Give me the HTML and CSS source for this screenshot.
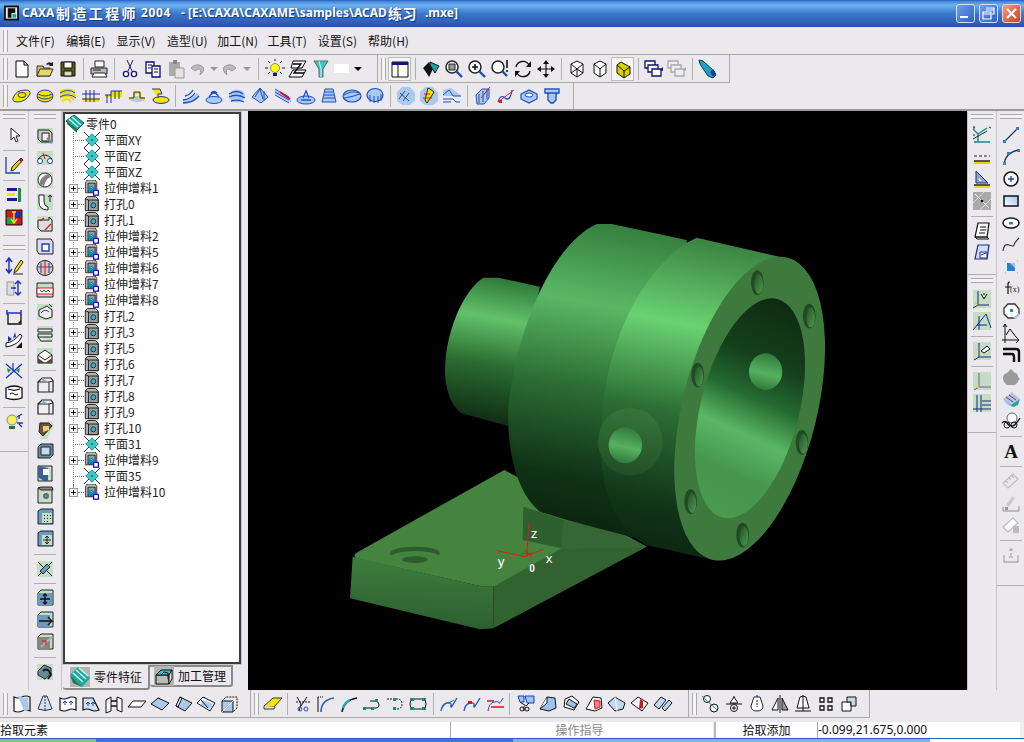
FILE: index.html
```html
<!DOCTYPE html>
<html lang="zh">
<head>
<meta charset="utf-8">
<title>CAXA制造工程师2004</title>
<link rel="stylesheet" href="styles.css">
</head>
<body>
<svg class="defs" width="0" height="0">
<defs>
<symbol id="new" viewBox="0 0 20 20"><path d="M4 2h8l4 4v12H4z" fill="#fff" stroke="#000"/><path d="M12 2v4h4" fill="none" stroke="#000"/></symbol>
<symbol id="open" viewBox="0 0 20 20"><path d="M2 7h6l1 2h6v8H2z" fill="#c8c860" stroke="#333"/><path d="M2 17l3-7h13l-3 7z" fill="#e8d860" stroke="#333"/><path d="M11 5q3-3 5-1l2-1v4h-4l1-1q-2-1-3 0" fill="#222"/></symbol>
<symbol id="save" viewBox="0 0 20 20"><path d="M3 3h14v14H3z" fill="#5b5b10" stroke="#111"/><path d="M6 3h8v6H6z" fill="#fff" stroke="#111"/><path d="M6 12h8v5H6z" fill="#d8d8c0" stroke="#111"/></symbol>
<symbol id="print" viewBox="0 0 20 20"><path d="M6 2h9v6H6z" fill="#fff" stroke="#222"/><path d="M2 9h16v6H2z" fill="#bbb" stroke="#222"/><path d="M5 14h11l2 4H3z" fill="#fff" stroke="#222"/><path d="M4 11h8" stroke="#222"/></symbol>
<symbol id="cut" viewBox="0 0 20 20"><path d="M7 1l5 11M13 1L8 12" stroke="#1c1c80" fill="none"/><circle cx="6" cy="15" r="2.6" fill="#fff" stroke="#1c1c80" stroke-width="1.4"/><circle cx="14" cy="15" r="2.6" fill="#fff" stroke="#1c1c80" stroke-width="1.4"/></symbol>
<symbol id="copy" viewBox="0 0 20 20"><path d="M3 3h8v11H3z" fill="#fff" stroke="#0a0a70" stroke-width="1.3"/><path d="M9 7h8v11H9z" fill="#fff" stroke="#0a0a70" stroke-width="1.3"/><path d="M5 6h4M5 9h3M11 10h4M11 13h4" stroke="#0a0a70"/></symbol>
<symbol id="paste" viewBox="0 0 20 20"><path d="M3 3h11v14H3z" fill="#aaa"/><path d="M7 1h4v4H7z" fill="#888"/><path d="M9 9h9v10H9z" fill="#e4e4e4" stroke="#999"/></symbol>
<symbol id="undo" viewBox="0 0 20 20"><path d="M4 9q6-6 12-1q2 4-3 8q2-6-2-6l-3 2-4-3z" fill="#bbb" stroke="#999"/></symbol>
<symbol id="redo" viewBox="0 0 20 20"><path d="M16 9q-6-6-12-1q-2 4 3 8q-2-6 2-6l3 2 4-3z" fill="#bbb" stroke="#999"/></symbol>
<symbol id="drop" viewBox="0 0 20 20"><path d="M6 8h8l-4 4z" fill="#000"/></symbol>
<symbol id="dropg" viewBox="0 0 20 20"><path d="M6 8h8l-4 4z" fill="#999"/></symbol>
<symbol id="light" viewBox="0 0 20 20"><circle cx="10" cy="9" r="4.5" fill="#ff0" stroke="#888"/><path d="M8 14h4v3H8z" fill="#1a1a90"/><path d="M10 0v2M3 2l2 2M17 2l-2 2M0 9h3M17 9h3M3 15l2-2M17 15l-2-2" stroke="#111"/></symbol>
<symbol id="zpl" viewBox="0 0 20 20"><path d="M5 2h13l-4 7H3z" fill="#fff" stroke="#000"/><path d="M5 11h13l-4 7H1z" fill="#fff" stroke="#000"/><path d="M5 5h8l-7 9h10" fill="none" stroke="#000" stroke-width="1.3"/></symbol>
<symbol id="fun" viewBox="0 0 20 20"><path d="M3 2h14l-5 8v8H8v-8z" fill="#35c8c8" stroke="#666"/><path d="M8 2l2 8V18" stroke="#cff" fill="none"/></symbol>
<symbol id="lay" viewBox="0 0 20 20"><path d="M2 3h16v15H2z" fill="#fff" stroke="#111"/><path d="M2 3h16v3H2z" fill="#14147c"/><path d="M8 6v12" stroke="#111"/></symbol>
<symbol id="fly" viewBox="0 0 20 20"><path d="M2 9l6-6 4 7-4 8q-3-5-6-9z" fill="#111"/><path d="M9 3l9 4-4 7-5-8z" fill="#12a5a5" stroke="#111"/></symbol>
<symbol id="zwin" viewBox="0 0 20 20"><circle cx="8" cy="8" r="6" fill="#fff" stroke="#222" stroke-width="1.5"/><path d="M5 5h6v6H5z" fill="#999" stroke="#222"/><path d="M12 12l6 6" stroke="#1c4ea8" stroke-width="2.4"/></symbol>
<symbol id="zin" viewBox="0 0 20 20"><circle cx="8" cy="8" r="6" fill="#fff" stroke="#222" stroke-width="1.5"/><path d="M5 8h6M8 5v6" stroke="#111" stroke-width="1.6"/><path d="M12 12l6 6" stroke="#1c4ea8" stroke-width="2.4"/></symbol>
<symbol id="zex" viewBox="0 0 20 20"><circle cx="8" cy="8" r="6" fill="#fff" stroke="#222" stroke-width="1.5"/><path d="M12 12l5 5" stroke="#1c4ea8" stroke-width="2.4"/><path d="M17 1v8M17 11v2" stroke="#111" stroke-width="1.6"/></symbol>
<symbol id="rot" viewBox="0 0 20 20"><path d="M3 8a7 7 0 0 1 13-2M17 12a7 7 0 0 1-13 2" fill="none" stroke="#111" stroke-width="1.4"/><path d="M18 2v6h-5zM2 18v-6h5z" fill="#111"/></symbol>
<symbol id="pan" viewBox="0 0 20 20"><path d="M10 2v16M2 10h16" stroke="#111" stroke-width="1.2"/><path d="M10 1l3 4H7zM10 19l3-4H7zM1 10l4-3v6zM19 10l-4-3v6z" fill="#111"/></symbol>
<symbol id="cwire" viewBox="0 0 20 20"><path d="M10 2l6 3v9l-6 4-6-4V5z" fill="#fff" stroke="#111"/><path d="M4 5l6 5 6-5M10 10v8M4 14l6-4 6 4" stroke="#111" fill="none"/></symbol>
<symbol id="chide" viewBox="0 0 20 20"><path d="M10 2l6 3v9l-6 4-6-4V5z" fill="#fff" stroke="#111"/><path d="M4 5l6 5 6-5M10 10v8" stroke="#111" fill="none"/></symbol>
<symbol id="cshade" viewBox="0 0 20 20"><path d="M8 3l9 5v7l-6 4-7-5V6z" fill="#d8d000" stroke="#111"/><path d="M4 6l7 6 6-4M11 12v7" stroke="#111" fill="none"/></symbol>
<symbol id="lay1" viewBox="0 0 20 20"><path d="M1 2h10v7H1z" fill="#fff" stroke="#10106c" stroke-width="1.3"/><path d="M4 6h10v7H4z" fill="#fff" stroke="#10106c" stroke-width="1.3"/><path d="M8 10h9v7H8z" fill="#fff" stroke="#10106c" stroke-width="1.3"/><path d="M16 11l3-3v4z" fill="#10106c"/></symbol>
<symbol id="lay2" viewBox="0 0 20 20"><path d="M1 2h10v7H1z" fill="#eee" stroke="#aaa" stroke-width="1.3"/><path d="M4 6h10v7H4z" fill="#eee" stroke="#aaa" stroke-width="1.3"/><path d="M8 10h9v7H8z" fill="#eee" stroke="#aaa" stroke-width="1.3"/><path d="M16 11l3-3v4z" fill="#aaa"/></symbol>
<symbol id="bot" viewBox="0 0 20 20"><path d="M1 1l4 1 11 10 2 4-3 3-5-2L2 5z" fill="#1aa6c0" stroke="#0a3a50"/><path d="M12 13l3-3 3 5-3 3z" fill="#1240a0"/></symbol>

<symbol id="y1" viewBox="0 0 20 20"><path d="M1 12q3-8 12-8q6 0 5 4q-4 8-13 8q-5 0-4-4z" fill="#f5e500" stroke="#1f3fb0"/><ellipse cx="10" cy="9" rx="4" ry="2.5" fill="none" stroke="#1f3fb0"/></symbol>
<symbol id="y2" viewBox="0 0 20 20"><ellipse cx="10" cy="10" rx="8" ry="6" fill="#f5e500" stroke="#1f3fb0"/><path d="M3 8q7 4 14 0M3 11q7 4 14 0" stroke="#1f3fb0" fill="none"/></symbol>
<symbol id="y3" viewBox="0 0 20 20"><path d="M2 6q8-5 15 0M2 9q8-5 16 1M2 12q8-5 14 2M4 15q6-4 9 1" fill="none" stroke="#f0dc00" stroke-width="2.2"/><path d="M2 7q8-5 15 0M2 11q8-5 16 1" fill="none" stroke="#1f3fb0"/></symbol>
<symbol id="y4" viewBox="0 0 20 20"><path d="M2 12h16v4H2z" fill="#f5e500"/><path d="M1 8h18M1 13h18M5 4v12M9 4v12M13 4v12" stroke="#1f2f90"/></symbol>
<symbol id="y5" viewBox="0 0 20 20"><path d="M1 9h6V5h11v6H1z" fill="#f5e500"/><path d="M1 9h6V5h11M3 9v8M7 9v8M11 5v8M15 5v8" stroke="#1f2f90" fill="none"/></symbol>
<symbol id="y6" viewBox="0 0 20 20"><ellipse cx="10" cy="13" rx="8" ry="3" fill="#a9c9ef"/><path d="M2 13h5V7h6v6h5" fill="none" stroke="#f0dc00" stroke-width="2"/><path d="M2 12h5V6h6v6h5" fill="none" stroke="#333"/></symbol>
<symbol id="y7" viewBox="0 0 20 20"><ellipse cx="11" cy="14" rx="8" ry="3.4" fill="#f5e500" stroke="#1f2f90"/><path d="M2 3h8l2 5H8v4" fill="#f5e500" stroke="#1f2f90"/></symbol>
<symbol id="b1" viewBox="0 0 20 20"><path d="M2 17q10 0 16-7l-2-3q-6 6-14 7z" fill="#a9c9ef"/><path d="M2 14q8-1 12-7M2 17q10 0 16-7M4 10q5-1 8-6" fill="none" stroke="#1f4fc0" stroke-width="1.3"/></symbol>
<symbol id="b2" viewBox="0 0 20 20"><ellipse cx="10" cy="14" rx="8" ry="3.5" fill="#a9c9ef" stroke="#1f4fc0"/><path d="M5 11q5-8 10 0M7 7q3-3 6 0" fill="none" stroke="#1f4fc0" stroke-width="1.3"/></symbol>
<symbol id="b3" viewBox="0 0 20 20"><ellipse cx="10" cy="10" rx="8" ry="6.5" fill="#a9c9ef"/><path d="M2 8q8-5 14 0M2 11q8-4 16 1M4 15q8-2 13 1" fill="none" stroke="#1f4fc0" stroke-width="1.3"/></symbol>
<symbol id="b4" viewBox="0 0 20 20"><path d="M10 2l8 9-7 6-9-6z" fill="#a9c9ef" stroke="#1f4fc0"/><path d="M5 11l5-8 3 10M14 5v10" stroke="#1f4fc0" fill="none"/></symbol>
<symbol id="b5" viewBox="0 0 20 20"><path d="M2 4l16 9v4L2 8z" fill="#a9c9ef"/><path d="M2 3l14 8M2 6l14 8M2 9l14 8" stroke="#1f4fc0"/><path d="M7 6l10 7" stroke="#d01030" stroke-width="2"/></symbol>
<symbol id="b6" viewBox="0 0 20 20"><ellipse cx="10" cy="14" rx="9" ry="4" fill="#a9c9ef" stroke="#1f4fc0"/><path d="M7 12l3-7 3 7M5 14h10" fill="none" stroke="#1f4fc0" stroke-width="1.3"/></symbol>
<symbol id="b7" viewBox="0 0 20 20"><path d="M6 3h8l1 5 2 8H3l2-8z" fill="#a9c9ef"/><path d="M6 3h8M6 6h8M5 9h10M4 12h12M3 16h14M6 3L3 16M14 3l3 13" stroke="#1f4fc0" fill="none"/></symbol>
<symbol id="b8" viewBox="0 0 20 20"><ellipse cx="10" cy="10" rx="9" ry="6" fill="#a9c9ef" stroke="#1f4fc0" stroke-width="1.2"/><path d="M2 9q8-5 15-2M2 12q8-1 16-4" stroke="#1f4fc0" fill="none"/></symbol>
<symbol id="b9" viewBox="0 0 20 20"><ellipse cx="10" cy="9" rx="8" ry="6.5" fill="#a9c9ef" stroke="#1f4fc0" stroke-width="1.2"/><path d="M5 9v7M9 10v7M13 10v7M16 8v7" stroke="#1f4fc0"/></symbol>
<symbol id="h1" viewBox="0 0 20 20"><path d="M6 1h8l5 6v8l-5 4H6l-5-4V6z" fill="#a9c9ef"/><path d="M3 13l6-8M7 15l6-8M4 7l9 8" stroke="#2a4f90"/></symbol>
<symbol id="h2" viewBox="0 0 20 20"><path d="M6 1h8l5 6v8l-5 4H6l-5-4V6z" fill="#a9c9ef"/><path d="M9 2l-3 12 2 3 7-11-4-3z" fill="#f5e500" stroke="#222"/><path d="M5 8h6M4 12h9" stroke="#d02020"/></symbol>
<symbol id="h3" viewBox="0 0 20 20"><path d="M1 4l8-2 10 8H1z" fill="#a9c9ef"/><path d="M1 9l6-5 4 6h8M1 13h10l3 3h4M1 16h8" stroke="#1f4fc0" fill="none"/></symbol>
<symbol id="k1" viewBox="0 0 20 20"><path d="M3 9l6-6h7v9l-5 6H4z" fill="#a9c9ef" stroke="#1f4fc0"/><path d="M6 8v9M10 5v11M14 3v10" stroke="#1f4fc0"/><path d="M8 12l9-11" stroke="#e02020"/></symbol>
<symbol id="k2" viewBox="0 0 20 20"><path d="M2 16q2-8 7-4t7-8" fill="none" stroke="#1f4fc0" stroke-width="1.3"/><path d="M2 16l16-12" stroke="#e02020"/><rect x="3" y="14" width="3" height="3" fill="#e02020"/></symbol>
<symbol id="k3" viewBox="0 0 20 20"><path d="M2 8l8-4 8 4v5l-8 4-8-4z" fill="#a9c9ef" stroke="#1f4fc0" stroke-width="1.2"/><ellipse cx="10" cy="9" rx="4" ry="2" fill="#fff" stroke="#1f4fc0"/></symbol>
<symbol id="k4" viewBox="0 0 20 20"><path d="M4 4h13v3l-3 4v4l-3 3H9l-2-3v-4L4 7z" fill="#a9c9ef"/><path d="M3 3h14v4H3zM6 7v7l3 3h2l3-3V7" fill="none" stroke="#1f4fc0" stroke-width="1.4"/></symbol>

<symbol id="arrow" viewBox="0 0 20 20"><path d="M7 3v12l3-3 2 5 2-1-2-5h4z" fill="#fff" stroke="#222"/></symbol>
<symbol id="pen" viewBox="0 0 20 20"><path d="M2 2v16h14" fill="none" stroke="#1f3fb0" stroke-width="1.3"/><path d="M17 3l2 2-9 10-3 1 1-4z" fill="#e8d000" stroke="#222"/><path d="M15 5l2-2 2 2-2 2z" fill="#c01010"/></symbol>
<symbol id="lib" viewBox="0 0 20 20"><path d="M3 3h10v3H3z" fill="#1a1a90"/><path d="M3 8h8v3H3z" fill="#f5e500"/><path d="M3 13h10v3H3z" fill="#1a1a90"/><path d="M14 3h3v14h-3z" fill="#1f9040"/></symbol>
<symbol id="col" viewBox="0 0 20 20"><path d="M2 3h16v15H2z" fill="#d01818" stroke="#111"/><path d="M3 10h7v7H3z" fill="#20a040"/><path d="M10 4h7v7h-7z" fill="#1a30c0"/><path d="M8 5h4M10 4v11M7 12l3 4 3-4" stroke="#f5e500" stroke-width="1.4" fill="none"/></symbol>
<symbol id="ti" viewBox="0 0 20 20"><path d="M5 3v13M2 6l3-4 3 4M2 13l3 4 3-4" fill="none" stroke="#1a30c0" stroke-width="1.5"/><path d="M10 17l1-4 6-9 2 2-6 9z" fill="#f5e500" stroke="#222"/><path d="M9 18h10" stroke="#222"/></symbol>
<symbol id="tj" viewBox="0 0 20 20"><path d="M3 4h7v13H3z" fill="#ddd" stroke="#999"/><path d="M14 3v14M11 6l3-3 3 3M11 14l3 3 3-3M7 10h5" fill="none" stroke="#1a30c0" stroke-width="1.4"/></symbol>
<symbol id="tk" viewBox="0 0 20 20"><path d="M4 6v10h13V6" fill="none" stroke="#111" stroke-width="1.3"/><path d="M3 5h14" stroke="#1a30c0" stroke-width="1.5"/><path d="M3 2v5M17 2v5" stroke="#1a30c0" stroke-width="1.4"/><path d="M14 15h3v-3z" fill="#111"/></symbol>
<symbol id="tl" viewBox="0 0 20 20"><path d="M2 13q8-1 14-9l2 2q-3 9-16 11z" fill="#fff" stroke="#111"/><path d="M4 6v6l4-3zM11 2l-2 6 3-1z" fill="#1a30c0"/><path d="M12 18h6v-6z" fill="#111"/></symbol>
<symbol id="tm" viewBox="0 0 20 20"><path d="M2 18L18 4M2 4l16 14M9 3v8" stroke="#1a30c0" stroke-width="1.2"/><path d="M3 8l4 2-3 3zM16 8l-4 2 3 3z" fill="#1f9040"/></symbol>
<symbol id="tn" viewBox="0 0 20 20"><path d="M2 6q8-4 16 0v10q-8 3-16 0z" fill="#fff" stroke="#111" stroke-width="1.3"/><path d="M4 7q6 3 12 0" fill="#f5e500" stroke="#111"/><path d="M6 12q2-2 4 0t4 0" stroke="#111" fill="none"/></symbol>
<symbol id="to" viewBox="0 0 20 20"><circle cx="8" cy="8" r="5" fill="#f0f060" stroke="#888"/><path d="M5 14h6v3H5z" fill="#207030"/><path d="M13 5l5-3M13 11h6M15 3v4M15 12l3 3" stroke="#1a30c0" fill="none" stroke-width="1.3"/></symbol>

<symbol id="g1" viewBox="0 0 20 20"><path d="M2 2h16v16H2z" fill="#c5dcc5"/><path d="M3 4h11l3 3v9H6l-3-3z" fill="#ccc" stroke="#222"/><path d="M7 7h7v8H7z" fill="#eee" stroke="#222"/><path d="M12 12l5 5" stroke="#888" stroke-width="2"/></symbol>
<symbol id="g2" viewBox="0 0 20 20"><path d="M2 3h16v14H2z" fill="#c5dcc5"/><circle cx="5" cy="13" r="2.5" fill="#fff" stroke="#1f3fb0"/><circle cx="15" cy="13" r="2.5" fill="#fff" stroke="#1f3fb0"/><path d="M3 11q7-8 14 0" stroke="#222" fill="none"/><path d="M8 5l2 6" stroke="#d01818"/></symbol>
<symbol id="g3" viewBox="0 0 20 20"><path d="M2 2h16v16H2z" fill="#c5dcc5"/><circle cx="10" cy="10" r="7" fill="#fff" stroke="#222"/><path d="M4 14q2-8 9-10l3 3q-5 1-7 9z" fill="#8a7a8a"/></symbol>
<symbol id="g4" viewBox="0 0 20 20"><path d="M2 2h16v16H2z" fill="#c5dcc5"/><path d="M4 3h5v7q0 4 4 5v3q-9 0-9-8z" fill="#fff" stroke="#222"/><path d="M15 10V3M13 5l2-2 2 2" stroke="#222" fill="none"/></symbol>
<symbol id="g5" viewBox="0 0 20 20"><path d="M2 2h16v16H2z" fill="#c5dcc5"/><path d="M3 6h11v-3l3 3v11H6l-3-3z" fill="#ddd" stroke="#222"/><path d="M5 7l4-3M10 16l6-6" stroke="#d01818" stroke-width="1.3"/></symbol>
<symbol id="g6" viewBox="0 0 20 20"><path d="M2 3h14l2 3v12H4l-2-3z" fill="#dde" stroke="#222"/><path d="M7 8h7v7H7z" fill="#fff" stroke="#1f3fb0" stroke-width="1.4"/></symbol>
<symbol id="g7" viewBox="0 0 20 20"><ellipse cx="10" cy="10" rx="8" ry="7.5" fill="#ccc" stroke="#222"/><path d="M3 9h14M10 3v14" stroke="#d01818"/><path d="M6 5v10M14 5v10" stroke="#1f3fb0"/></symbol>
<symbol id="g8" viewBox="0 0 20 20"><path d="M2 3h16v14H2z" fill="#c5dcc5" stroke="#222"/><path d="M2 8h16v6H2z" fill="#fff" stroke="#d01818"/><path d="M5 10l2 2 2-2 2 2 2-2 2 2" stroke="#1f3fb0" fill="none"/></symbol>
<symbol id="g9" viewBox="0 0 20 20"><path d="M2 2h16v16H2z" fill="#c5dcc5"/><path d="M4 8l8-4 5 4v7l-6 2-7-3z" fill="#eee" stroke="#222"/><path d="M6 11q4-5 8-1" stroke="#1f3fb0" fill="none"/><path d="M14 2l3 3" stroke="#222"/></symbol>
<symbol id="g10" viewBox="0 0 20 20"><path d="M2 2h16v16H2z" fill="#c5dcc5"/><path d="M3 5h14v3H3zM3 10h14v3H3zM3 13l3 4h11" fill="#eee" stroke="#222"/></symbol>
<symbol id="g11" viewBox="0 0 20 20"><path d="M2 2h16v16H2z" fill="#c5dcc5"/><path d="M3 9l7-5 7 5v8H3z" fill="#fff" stroke="#222"/><path d="M3 17V12l7 5 7-5v5z" fill="#5a4040"/><path d="M3 9l7 5 7-5" stroke="#222" fill="none"/></symbol>
<symbol id="c1" viewBox="0 0 20 20"><path d="M3 7l4-4h9l2 3v11H3z" fill="#eee" stroke="#222" stroke-width="1.2"/><path d="M3 7h11l4-1M14 7v10" stroke="#222" fill="none"/><path d="M7 3q-1 4 7 4" fill="#9ab"/></symbol>
<symbol id="c2" viewBox="0 0 20 20"><path d="M3 3h14l2 3-7 14H6z" fill="#c5dcc5"/><path d="M5 4h9l3 3-9 10-4-4z" fill="#6a5040" stroke="#222"/><path d="M8 7h6v4l-6 2z" fill="#e8d070"/></symbol>
<symbol id="c3" viewBox="0 0 20 20"><path d="M3 3h14v14H3z" fill="#c5dcc5"/><path d="M3 6l3-3h12v11l-3 3H3z" fill="#6a8aa8" stroke="#222"/><path d="M6 6h9v8H6z" fill="#c8d8e8" stroke="#222"/></symbol>
<symbol id="c4" viewBox="0 0 20 20"><path d="M3 3h14v15H3z" fill="#c5dcc5" stroke="#222"/><path d="M3 3l10 2v13H9L3 14z" fill="#3a6090"/><path d="M8 6h6v6H8z" fill="#fff"/></symbol>
<symbol id="c5" viewBox="0 0 20 20"><path d="M3 3h14v15H3z" fill="#c5dcc5" stroke="#222"/><path d="M3 3l3-1h11l1 3H6z" fill="#987" stroke="#222"/><circle cx="11" cy="11" r="3" fill="#667"/><circle cx="11" cy="11" r="1" fill="#4ab"/></symbol>
<symbol id="c6" viewBox="0 0 20 20"><path d="M3 4l3-2h12v15H3z" fill="#6a9ac0" stroke="#222"/><path d="M7 6h10v10H7z" fill="#c5dcc5"/><path d="M9 8h1v1H9zM12 8h1v1h-1zM15 8h1v1h-1zM9 11h1v1H9zM12 11h1v1h-1zM15 11h1v1h-1zM9 14h1v1H9zM12 14h1v1h-1z" fill="#222"/></symbol>
<symbol id="c7" viewBox="0 0 20 20"><path d="M3 4l3-2h12v15H3z" fill="#6a9ac0" stroke="#222"/><path d="M7 6h10v10H7z" fill="#c5dcc5"/><path d="M12 7v8M8 11h8M10 9l2-2 2 2M10 13l2 2 2-2" stroke="#222" fill="none"/></symbol>
<symbol id="c8" viewBox="0 0 20 20"><path d="M2 2h16v16H2z" fill="#c5dcc5"/><path d="M3 3l14 14M3 17L17 3" stroke="#222"/><path d="M5 12l7-7 3 3-7 7z" fill="#6a9ac0" stroke="#223"/></symbol>
<symbol id="c9" viewBox="0 0 20 20"><path d="M3 5l3-3h12v15H3z" fill="#c5dcc5" stroke="#222"/><path d="M3 5h14v12H3z" fill="#6a9ac0"/><path d="M10 6v10M5 11h10M8 8l2-2 2 2M8 14l2 2 2-2" stroke="#111" fill="none" stroke-width="1.4"/></symbol>
<symbol id="c10" viewBox="0 0 20 20"><path d="M3 5l3-3h12v15H3z" fill="#c5dcc5" stroke="#222"/><path d="M3 5h12v12H3z" fill="#6a9ac0"/><path d="M4 11h13l-4-4M17 11l-4 4" stroke="#111" fill="none" stroke-width="1.4"/></symbol>
<symbol id="c11" viewBox="0 0 20 20"><path d="M3 5l3-3h12v15H3z" fill="#c5dcc5" stroke="#222"/><path d="M3 5h12v12H3z" fill="#887"/><path d="M6 15L17 5" stroke="#aac" stroke-width="2"/><path d="M7 9h4v4" stroke="#d01818" fill="none"/></symbol>
<symbol id="c12" viewBox="0 0 20 20"><path d="M2 2h16v16H2z" fill="#c5dcc5"/><path d="M3 9l6-6 7 3v6l-6 5-7-4z" fill="#6a8a98" stroke="#222"/><path d="M8 9q3-3 6 0l2 4-3 4" fill="none" stroke="#111" stroke-width="1.8"/></symbol>

<symbol id="r1" viewBox="0 0 20 20"><path d="M1 2h2M2 2v2M1 10h2M2 17h2M17 2l2 1" stroke="#222"/><path d="M6 17V9l-5-5M6 9l9-6M3 17h15" stroke="#1a8a90" fill="none" stroke-width="1.4"/><path d="M1 14l14-8" stroke="#222"/></symbol>
<symbol id="r2" viewBox="0 0 20 20"><path d="M2 9h16" stroke="#222" stroke-dasharray="3 2"/><path d="M2 14h16" stroke="#222" stroke-width="1.5"/><path d="M2 16h16" stroke="#e8d000" stroke-width="2"/></symbol>
<symbol id="r3" viewBox="0 0 20 20"><path d="M4 2v12h12z" fill="#8aa8c8" stroke="#1a2a80"/><path d="M7 9v3h3z" fill="#fff"/><path d="M2 16h16" stroke="#222" stroke-width="1.5"/><path d="M2 18h16" stroke="#e8d000" stroke-width="1.6"/></symbol>
<symbol id="r4" viewBox="0 0 20 20"><path d="M1 1h18v18H1z" fill="#aaa"/><path d="M1 12L12 1M8 19L19 8" stroke="#ddd"/><path d="M3 3l14 14" stroke="#fff"/><circle cx="10" cy="10" r="1.3" fill="#111"/></symbol>
<symbol id="r5" viewBox="0 0 20 20"><path d="M6 2h11l-2 14H3z" fill="#fff" stroke="#111" stroke-width="1.2"/><path d="M3 16h12l2 2H5zM8 6h6M8 9h6M7 12h6" stroke="#111" fill="none"/></symbol>
<symbol id="r6" viewBox="0 0 20 20"><path d="M6 2h11l-2 14H3z" fill="#cfe0f5" stroke="#1a2a90" stroke-width="1.2"/><path d="M8 9h7v6H8z" fill="#fff" stroke="#1a2a90"/><path d="M9 12l5-2" stroke="#1a2a90"/></symbol>
<symbol id="r7" viewBox="0 0 20 20"><path d="M1 1h18v18H1z" fill="#c5dcc5"/><path d="M6 2v14H17M6 16l-5 3" stroke="#1a2a80" fill="none"/><path d="M9 5l3 5M15 5l-3 5M11 5h2" stroke="#111"/><path d="M3 14l3 2" stroke="#e8d000"/></symbol>
<symbol id="r8" viewBox="0 0 20 20"><path d="M1 1h18v18H1z" fill="#c5dcc5"/><path d="M1 19L14 3M7 5v14M14 3l5 14M5 14h10" stroke="#1a2a80" fill="none"/></symbol>
<symbol id="r9" viewBox="0 0 20 20"><path d="M1 1h18v18H1z" fill="#c5dcc5"/><path d="M7 2v14H19M7 16l-5 3" stroke="#1a2a80" fill="none"/><path d="M9 10l6-5 3 3-6 4z" fill="#fff" stroke="#111"/></symbol>
<symbol id="r10" viewBox="0 0 20 20"><path d="M1 1h18v18H1z" fill="#c5dcc5"/><path d="M7 2v14H19M7 16l-5 3" stroke="#667" fill="none"/><path d="M6 14l2 3H4z" fill="#e8d000"/></symbol>
<symbol id="r11" viewBox="0 0 20 20"><path d="M1 1h18v18H1z" fill="#c5dcc5"/><path d="M5 2v17M9 2v17M1 16h18M10 8h9M10 12h9" stroke="#1a2a80" fill="none"/></symbol>
<symbol id="s1" viewBox="0 0 20 20"><path d="M3 17L16 4" stroke="#2a3a50" stroke-width="1.3"/><rect x="2" y="15" width="3" height="3" fill="#2a80d0"/><rect x="15" y="2" width="3" height="3" fill="#2a80d0"/></symbol>
<symbol id="s2" viewBox="0 0 20 20"><path d="M3 18Q4 6 17 3" fill="none" stroke="#2a3a50" stroke-width="1.3"/><rect x="2" y="15" width="3" height="3" fill="#2aa0a0"/><rect x="6" y="5" width="3" height="3" fill="#2a80d0"/><rect x="16" y="2" width="3" height="3" fill="#2a80d0"/></symbol>
<symbol id="s3" viewBox="0 0 20 20"><circle cx="10" cy="10" r="7" fill="#fff" stroke="#111" stroke-width="1.5"/><path d="M7 10h6M10 7v6" stroke="#1f3fb0" stroke-width="1.3"/></symbol>
<symbol id="s4" viewBox="0 0 20 20"><path d="M3 5h14v10H3z" fill="url(#sg)" stroke="#111" stroke-width="1.5"/></symbol>
<symbol id="s5" viewBox="0 0 20 20"><ellipse cx="10" cy="10" rx="8" ry="5" fill="#fff" stroke="#111" stroke-width="1.5"/><rect x="8" y="9" width="4" height="2.5" fill="#2a80d0"/></symbol>
<symbol id="s6" viewBox="0 0 20 20"><path d="M2 16q1-8 6-6t5 0 5-7" fill="none" stroke="#334" stroke-width="1.2"/></symbol>
<symbol id="s7" viewBox="0 0 20 20"><path d="M6 6h8v8H6z" fill="#2a80d0"/><path d="M9 6h5v5z" fill="#9cc8f0"/><path d="M4 4h1M16 4h1M4 16h1M16 16h1" stroke="#aab"/></symbol>
<symbol id="s8" viewBox="0 0 20 20"><path d="M7 15V5q0-2 2-2M4 8h6" fill="none" stroke="#111" stroke-width="1.2"/><text x="9" y="13" font-size="8" font-family="Liberation Serif,serif" fill="#111">(x)</text></symbol>
<symbol id="s9" viewBox="0 0 20 20"><path d="M7 3h7l4 5v5l-4 4H7l-4-4V7z" fill="#fff" stroke="#333" stroke-width="1.3"/><path d="M12 17l6-5v3l-3 3z" fill="#a9c9ef"/><rect x="9" y="8" width="3" height="3" fill="#2a80d0"/></symbol>
<symbol id="s10" viewBox="0 0 20 20"><path d="M4 1v16h14M1 17h3M4 17v3M2 4l2-3 2 3M15 14l3 3-3 3" fill="none" stroke="#111"/><path d="M5 12l4-6 6 8" fill="none" stroke="#111"/></symbol>
<symbol id="s11" viewBox="0 0 20 20"><path d="M2 4h13q3 0 3 3v10M2 9h9q2 0 2 3v5" fill="none" stroke="#111" stroke-width="2.4"/></symbol>
<symbol id="s12" viewBox="0 0 20 20"><path d="M2 11q0-4 4-5l4-4 4 4q3 0 3 4l2 2q-2 1-2 3l-3 3H6q-4-3-4-7z" fill="#9a9a9a"/></symbol>
<symbol id="s13" viewBox="0 0 20 20"><path d="M2 10l9-7 8 7-5 8q-8 0-12-8z" fill="#a9c9ef"/><path d="M2 10l8 6 9-6-2 6-5 2z" fill="#2aa0a0"/><path d="M5 8l7 5M8 6l7 5" stroke="#d02020"/></symbol>
<symbol id="s14" viewBox="0 0 20 20"><circle cx="11" cy="7" r="5" fill="#fff" stroke="#666"/><path d="M1 12q3-3 5 0t5 3 8-8" fill="none" stroke="#111" stroke-width="1.4"/><circle cx="6" cy="14" r="3" fill="none" stroke="#111"/><circle cx="13" cy="14" r="3" fill="none" stroke="#111"/></symbol>
<symbol id="s15" viewBox="0 0 20 20"><text x="10" y="17" text-anchor="middle" font-size="19" font-weight="700" font-family="Liberation Serif,serif" fill="#111">A</text></symbol>
<symbol id="s16" viewBox="0 0 20 20"><path d="M2 12l10-9 5 5-10 9zM5 10l2 2M8 7l2 2M11 5l2 2" fill="none" stroke="#bbb" stroke-width="1.2"/></symbol>
<symbol id="s17" viewBox="0 0 20 20"><path d="M5 12l6-9 3 2-6 9z" fill="#ccc"/><path d="M2 18h16M2 14v4M18 13v5" stroke="#aaa" stroke-width="1.4"/><path d="M4 14h3v3H4z" fill="#999"/></symbol>
<symbol id="s18" viewBox="0 0 20 20"><path d="M2 12l10-9 5 5-10 9z" fill="#fff" stroke="#bbb" stroke-width="1.2"/><path d="M12 11h6v7h-6z" fill="#bbb"/></symbol>
<symbol id="s19" viewBox="0 0 20 20"><path d="M3 10v7h14v-7" fill="none" stroke="#aaa" stroke-width="1.3"/><path d="M10 3v3M10 8v3M8 5h4M8 12h4" stroke="#999"/></symbol>

<symbol id="u1" viewBox="0 0 20 20"><path d="M2 3q4 2 8 0t8 0v14q-4-2-8 0t-8 0z" fill="#fff" stroke="#111" stroke-width="1.2"/><path d="M6 2l4 1q4 1 6 0l1 13-5 1z" fill="#a9c9ef"/></symbol>
<symbol id="u2" viewBox="0 0 20 20"><path d="M8 2h4l5 13q-7 3-14 0z" fill="#cfe0f5" stroke="#333"/><path d="M10 2v14" stroke="#333" stroke-dasharray="2 1"/></symbol>
<symbol id="u3" viewBox="0 0 20 20"><path d="M2 4q4 2 8 0t8 0v12q-4-2-8 0t-8 0z" fill="#fff" stroke="#111" stroke-width="1.2"/><path d="M7 7v4M13 7v4M5 9l2-2 2 2M11 9l2-2 2 2" stroke="#1f3fb0" fill="none"/></symbol>
<symbol id="u4" viewBox="0 0 20 20"><path d="M2 4h10l6 12q-4 2-8 0t-8 0z" fill="#cfe0f5" stroke="#111" stroke-width="1.2"/><path d="M7 8v4M12 8v4M5 10l2-2 2 2M10 10l2-2 2 2" stroke="#1f3fb0" fill="none"/></symbol>
<symbol id="u5" viewBox="0 0 20 20"><path d="M2 6l5-3v14l-5 2zM13 3l5 2v13l-5-2z" fill="#fff" stroke="#111"/><path d="M7 7h6M7 12h6" stroke="#111" stroke-width="1.4"/></symbol>
<symbol id="u6" viewBox="0 0 20 20"><path d="M6 7h13l-5 6H1z" fill="#fff" stroke="#111"/></symbol>
<symbol id="u7" viewBox="0 0 20 20"><path d="M1 10l7-6 11 5-7 7z" fill="#a9c9ef" stroke="#111"/></symbol>
<symbol id="u8" viewBox="0 0 20 20"><path d="M7 3l12 6-7 8-9-5z" fill="#a9c9ef" stroke="#111"/><path d="M3 12l4-9 2 1-4 9z" fill="#fff" stroke="#111"/></symbol>
<symbol id="u9" viewBox="0 0 20 20"><path d="M1 9l6-6 12 6-5 8z" fill="#fff" stroke="#111"/><path d="M7 6l10 4-3 5-9-4z" fill="#a9c9ef"/><path d="M5 6l7 8" stroke="#111"/></symbol>
<symbol id="u10" viewBox="0 0 20 20"><path d="M3 7h11v11H3z" fill="#a9c9ef" stroke="#111"/><path d="M3 7l4-4h11v11l-4 4" fill="none" stroke="#111" stroke-dasharray="2 1"/><path d="M3 18L14 7" stroke="#fff"/></symbol>
<symbol id="ers" viewBox="0 0 20 20"><path d="M1 12l9-8h9l-8 9H3z" fill="#f5e500" stroke="#333"/><path d="M1 12v3h10l1-2" fill="#eee" stroke="#333"/></symbol>
<symbol id="v1" viewBox="0 0 20 20"><path d="M4 3l4 7-2 7M14 3l-6 9" stroke="#111" fill="none"/><circle cx="7" cy="15" r="2" fill="none" stroke="#1f4fc0"/><circle cx="13" cy="15" r="2" fill="none" stroke="#1f4fc0"/><path d="M3 8h14" stroke="#111" stroke-dasharray="2 1"/></symbol>
<symbol id="v2" viewBox="0 0 20 20"><path d="M2 3h6" stroke="#111" stroke-dasharray="1 1"/><path d="M2 3v15" stroke="#111"/><path d="M5 18Q5 6 18 4" fill="none" stroke="#2a60c0" stroke-width="1.6"/></symbol>
<symbol id="v3" viewBox="0 0 20 20"><path d="M3 18Q5 6 18 4" fill="none" stroke="#111" stroke-width="1.5"/><path d="M4 14Q6 8 11 6" fill="none" stroke="#18b0c0" stroke-width="2.4"/></symbol>
<symbol id="v4" viewBox="0 0 20 20"><path d="M3 14h11q3 0 3-3t-3-4H8" fill="none" stroke="#111"/><rect x="1" y="13" width="3" height="3" fill="#1a8a70"/><rect x="9" y="13" width="3" height="3" fill="#1a8a70"/><rect x="13" y="5" width="3" height="3" fill="#1a8a70"/></symbol>
<symbol id="v5" viewBox="0 0 20 20"><path d="M2 5h10q5 0 5 5t-5 5H9" fill="none" stroke="#111" stroke-dasharray="2 1"/><rect x="8" y="13" width="3" height="3" fill="#1a8a70"/><rect x="8" y="4" width="3" height="3" fill="#1a8a70"/></symbol>
<symbol id="v6" viewBox="0 0 20 20"><path d="M3 5h14M3 15h14" stroke="#111"/><path d="M17 5q2 5 0 10M3 5q-2 5 0 10" fill="none" stroke="#111"/><rect x="2" y="4" width="4" height="3" fill="#1a8a70"/><rect x="14" y="4" width="4" height="3" fill="#1a8a70"/><rect x="2" y="13" width="4" height="3" fill="#1a8a70"/><rect x="14" y="13" width="4" height="3" fill="#1a8a70"/></symbol>
<symbol id="w1" viewBox="0 0 20 20"><path d="M2 17q1-7 6-8t4 3 6-8" fill="none" stroke="#1f4fc0" stroke-width="1.3"/><path d="M2 16q5-9 8-7l5-3" fill="none" stroke="#2a80a0"/></symbol>
<symbol id="w2" viewBox="0 0 20 20"><path d="M2 17q1-7 6-8t4 3 6-8" fill="none" stroke="#1f4fc0" stroke-width="1.3"/><rect x="6" y="7" width="4" height="3" fill="#d01818"/></symbol>
<symbol id="w3" viewBox="0 0 20 20"><path d="M3 17q1-8 6-9t5 1 4-5" fill="none" stroke="#1f4fc0"/><path d="M2 7h7M6 13h13" stroke="#d01818" stroke-width="1.6"/></symbol>
<symbol id="x1" viewBox="0 0 20 20"><path d="M3 2h6v6H6M3 2l2 6M10 2h9v7h-7z" fill="#9cc4ee" stroke="#1f3fb0"/><path d="M5 8l6 4 3-3M9 12v5" stroke="#111" fill="none"/><circle cx="7" cy="15" r="2" fill="none" stroke="#111"/><circle cx="12" cy="15" r="2" fill="none" stroke="#111"/></symbol>
<symbol id="x2" viewBox="0 0 20 20"><path d="M9 3l8 1 1 10-7 3-9-2z" fill="#9cc4ee" stroke="#111"/><path d="M9 3v6l-7 6" fill="#fff" stroke="#111"/></symbol>
<symbol id="x3" viewBox="0 0 20 20"><path d="M4 5l7-3 7 6-5 8-10-3z" fill="#fff" stroke="#111"/><path d="M8 5l8 5-3 4-8-4z" fill="#9cc4ee" stroke="#111"/></symbol>
<symbol id="x4" viewBox="0 0 20 20"><path d="M9 3l8 1 1 10-7 3-9-2z" fill="#fff" stroke="#111"/><path d="M10 6l6 1v6l-5 2z" fill="#f08090" stroke="#d01818"/></symbol>
<symbol id="x5" viewBox="0 0 20 20"><path d="M1 9l7-6 10 6-2 6-8 2z" fill="#c0d8f4" stroke="#111"/><path d="M8 3l2 14" stroke="#fff"/></symbol>
<symbol id="x6" viewBox="0 0 20 20"><path d="M1 9l7-6 10 6-6 8z" fill="#fff" stroke="#111"/><path d="M10 5l3 2v7l-4 1z" fill="#d01818"/></symbol>
<symbol id="x7" viewBox="0 0 20 20"><path d="M1 11l7-8 5 3-7 9zM9 14l7-8 3 3-7 8z" fill="#c0d8f4" stroke="#111"/></symbol>
<symbol id="d1" viewBox="0 0 20 20"><circle cx="6" cy="5" r="3.5" fill="#fff" stroke="#111"/><circle cx="13" cy="14" r="4" fill="#fff" stroke="#111"/><path d="M1 2l16 15" stroke="#1a8a70"/></symbol>
<symbol id="d2" viewBox="0 0 20 20"><path d="M10 2v16M2 10h16" stroke="#111"/><path d="M6 9l4-6 4 6z" fill="#fff" stroke="#111"/><circle cx="10" cy="14" r="3.5" fill="#fff" stroke="#111"/><path d="M8 14h4M10 12v4" stroke="#111"/></symbol>
<symbol id="d3" viewBox="0 0 20 20"><path d="M7 3h6l3 9q0 5-6 5t-6-5z" fill="#fff" stroke="#224"/><path d="M10 6v7M10 3V1" stroke="#224" stroke-dasharray="2 1"/></symbol>
<symbol id="d4" viewBox="0 0 20 20"><path d="M10 1v18" stroke="#111"/><path d="M8 4v12H2z" fill="#fff" stroke="#111"/><path d="M12 4v12h6z" fill="#999" stroke="#111"/></symbol>
<symbol id="d5" viewBox="0 0 20 20"><path d="M7 3q3-2 6 0l3 11H4z" fill="#fff" stroke="#111"/><path d="M2 17h16M10 1v16" stroke="#111"/></symbol>
<symbol id="d6" viewBox="0 0 20 20"><path d="M4 4h4v4H4zM12 4h4v4h-4zM4 12h4v4H4zM12 12h4v4h-4z" fill="#fff" stroke="#111" stroke-width="1.3"/></symbol>
<symbol id="d7" viewBox="0 0 20 20"><path d="M3 8h9v9H3z" fill="#fff" stroke="#111"/><path d="M8 3h9v9h-5V8H8z" fill="#c8d8e8" stroke="#111"/></symbol>

<symbol id="tpad" viewBox="0 0 16 20"><path d="M0 3l2-3h10l2 3v13H0z" fill="#bbb" stroke="#111"/><path d="M3 4h9v11H3z" fill="#999" stroke="#111"/><path d="M3 8q5-3 9 4l-2 4-6-2z" fill="#0a8a9a"/><path d="M5 8q3 1 5 4" stroke="#3df" fill="none"/><rect x="10" y="13" width="6" height="6" fill="#fff" stroke="#1010e0" stroke-width="1.6"/></symbol>
<symbol id="thole" viewBox="0 0 16 18"><path d="M.5 3L3 .5h9l3 3v13H.5z" fill="#b4b4b4" stroke="#111"/><path d="M4 4.5h11v12H4z" fill="#9c9c9c" stroke="#111"/><path d="M.5 3L4 4.5M12 .5" stroke="#111"/><circle cx="9.5" cy="10.5" r="2.8" fill="#28b8b8" stroke="#125"/></symbol>
<symbol id="tpl" viewBox="0 0 18 18"><path d="M0 0l18 18M0 18L18 0" stroke="#111"/><path d="M9 2l7 7-7 7-7-7z" fill="#3ac8c8" stroke="#1a8a8a"/><circle cx="9" cy="9" r=".8" fill="#111"/></symbol>
<symbol id="troot" viewBox="0 0 18 18"><path d="M0 6l8-6 10 8-7 7z" fill="#22a8a8" stroke="#064"/><path d="M3 4l9 8M6 2l9 8" stroke="#bff" stroke-width="1.6"/><path d="M1 6l10 9v3L1 9z" fill="#1f7a4a"/></symbol>
<symbol id="ttab1" viewBox="0 0 20 20"><path d="M0 8l8-8 12 11-8 9z" fill="#18a8a0"/><path d="M3 6l10 9M6 3l10 9M9 1l9 8" stroke="#c8f8f0" stroke-width="1.6"/><path d="M0 8l12 12v0L3 16z" fill="#1f7a4a"/></symbol>
<symbol id="ttab2" viewBox="0 0 20 20"><path d="M2 9h13v9H2z" fill="#bbb" stroke="#111"/><path d="M2 9l5-5h11l-3 5z" fill="#22c8d0" stroke="#111"/><path d="M7 9l3-3 4 1v6" fill="none" stroke="#111"/><path d="M15 9l3-5v9l-3 5z" fill="#ddd" stroke="#111"/></symbol>
<linearGradient id="sg" x1="0" y1="1" x2="1" y2="0"><stop offset="0" stop-color="#fff"/><stop offset="1" stop-color="#9cc4ee"/></linearGradient>
</defs>
</svg>

<div class="app">
  <header class="title">
    <svg class="appicon" viewBox="0 0 16 16"><path d="M0 0h16v16H0z" fill="#111"/><path d="M2 2h12v12H2z" fill="#eee"/><path d="M4 3h8v5H8v5H4z" fill="#111"/><path d="M9 9h4v4H9z" fill="#1aa"/></svg>
    <div class="title-text"><span class="cn">CAXA</span><span class="zh">制造工程师</span><span class="yr">2004</span><span class="path">- [E:\CAXA\CAXAME\samples\ACAD</span><span class="zh zh2">练习</span><span class="ext">.mxe]</span></div>
    <div class="winbtns">
      <div class="wb"><svg viewBox="0 0 19 19" width="19" height="19"><path d="M4 12h8v2H4z" fill="#fff"/></svg></div>
      <div class="wb"><svg viewBox="0 0 19 19" width="19" height="19"><path d="M7 4h8v6h-2M4 8h8v7H4zM4 10h8M7 6h8" fill="none" stroke="#fff" stroke-width="1.2"/></svg></div>
      <div class="wb close"><svg viewBox="0 0 19 19" width="19" height="19"><path d="M5 5l9 9M14 5l-9 9" stroke="#fff" stroke-width="2.2"/></svg></div>
    </div>
  </header>

  <nav class="menubar">
    <span class="grip"></span>
    <span class="mi">文件(F)</span><span class="mi">编辑(E)</span><span class="mi">显示(V)</span><span class="mi">造型(U)</span><span class="mi">加工(N)</span><span class="mi">工具(T)</span><span class="mi">设置(S)</span><span class="mi">帮助(H)</span>
  </nav>

  <div class="row">
    <div class="bar bar-a">
      <span class="grip"></span>
      <b class="s"><svg class="i"><use href="#new"/></svg></b><b class="s"><svg class="i"><use href="#open"/></svg></b><b class="s"><svg class="i"><use href="#save"/></svg></b><i class="sep"></i>
      <b class="s"><svg class="i"><use href="#print"/></svg></b><i class="sep"></i>
      <b class="s"><svg class="i"><use href="#cut"/></svg></b><b class="s"><svg class="i"><use href="#copy"/></svg></b><b class="s"><svg class="i"><use href="#paste"/></svg></b>
      <b class="s s-u"><svg class="i"><use href="#undo"/></svg></b><b class="s s-d"><svg class="i"><use href="#dropg"/></svg></b><b class="s s-u"><svg class="i"><use href="#redo"/></svg></b><b class="s s-d"><svg class="i"><use href="#dropg"/></svg></b><i class="sep sep-w"></i>
      <b class="s"><svg class="i"><use href="#light"/></svg></b><b class="s"><svg class="i"><use href="#zpl"/></svg></b><b class="s"><svg class="i"><use href="#fun"/></svg></b>
      <b class="s s-c"><span class="swatch"></span></b><b class="s s-e"><svg class="i"><use href="#drop"/></svg></b>
    </div>
    <div class="bar bar-b">
      <span class="grip grip-b"></span>
      <b class="s on"><svg class="i"><use href="#lay"/></svg></b><i class="sep"></i>
      <b class="s"><svg class="i"><use href="#fly"/></svg></b><b class="s"><svg class="i"><use href="#zwin"/></svg></b><b class="s"><svg class="i"><use href="#zin"/></svg></b><b class="s"><svg class="i"><use href="#zex"/></svg></b><b class="s"><svg class="i"><use href="#rot"/></svg></b><b class="s"><svg class="i"><use href="#pan"/></svg></b><i class="sep"></i>
      <b class="s"><svg class="i"><use href="#cwire"/></svg></b><b class="s"><svg class="i"><use href="#chide"/></svg></b><b class="s on"><svg class="i"><use href="#cshade"/></svg></b><i class="sep"></i>
      <b class="s"><svg class="i"><use href="#lay1"/></svg></b><b class="s"><svg class="i"><use href="#lay2"/></svg></b><i class="sep"></i>
      <b class="s"><svg class="i"><use href="#bot"/></svg></b>
    </div>
  </div>

  <div class="row row-3">
    <div class="bar bar-c">
      <span class="grip"></span>
      <b class="s"><svg class="i"><use href="#y1"/></svg></b><b class="s"><svg class="i"><use href="#y2"/></svg></b><b class="s"><svg class="i"><use href="#y3"/></svg></b><b class="s"><svg class="i"><use href="#y4"/></svg></b><b class="s"><svg class="i"><use href="#y5"/></svg></b><b class="s"><svg class="i"><use href="#y6"/></svg></b><b class="s"><svg class="i"><use href="#y7"/></svg></b><i class="sep"></i>
      <b class="s"><svg class="i"><use href="#b1"/></svg></b><b class="s"><svg class="i"><use href="#b2"/></svg></b><b class="s"><svg class="i"><use href="#b3"/></svg></b><b class="s"><svg class="i"><use href="#b4"/></svg></b><b class="s"><svg class="i"><use href="#b5"/></svg></b><b class="s"><svg class="i"><use href="#b6"/></svg></b><b class="s"><svg class="i"><use href="#b7"/></svg></b><b class="s"><svg class="i"><use href="#b8"/></svg></b><b class="s"><svg class="i"><use href="#b9"/></svg></b><i class="sep"></i>
      <b class="s"><svg class="i"><use href="#h1"/></svg></b><b class="s"><svg class="i"><use href="#h2"/></svg></b><b class="s"><svg class="i"><use href="#h3"/></svg></b><i class="sep"></i>
      <b class="s"><svg class="i"><use href="#k1"/></svg></b><b class="s"><svg class="i"><use href="#k2"/></svg></b><b class="s"><svg class="i"><use href="#k3"/></svg></b><b class="s"><svg class="i"><use href="#k4"/></svg></b>
    </div>
  </div>

  <main class="main">
    <aside class="vbar vbar-1">
      <span class="hgrip"></span>
      <b class="v"><svg class="i"><use href="#arrow"/></svg></b><i class="hsep"></i>
      <b class="v"><svg class="i"><use href="#pen"/></svg></b><i class="hsep"></i>
      <b class="v"><svg class="i"><use href="#lib"/></svg></b><b class="v"><svg class="i"><use href="#col"/></svg></b>
      <i class="hsep hsep-end"></i><span class="hgrip"></span>
      <b class="v"><svg class="i"><use href="#ti"/></svg></b><b class="v"><svg class="i"><use href="#tj"/></svg></b><i class="hsep"></i>
      <b class="v"><svg class="i"><use href="#tk"/></svg></b><b class="v"><svg class="i"><use href="#tl"/></svg></b><i class="hsep"></i>
      <b class="v"><svg class="i"><use href="#tm"/></svg></b><b class="v"><svg class="i"><use href="#tn"/></svg></b><i class="hsep"></i>
      <b class="v"><svg class="i"><use href="#to"/></svg></b><i class="hsep hsep-foot"></i>
    </aside>
    <aside class="vbar vbar-2">
      <span class="hgrip hgrip-2"></span>
      <b class="v"><svg class="i"><use href="#g1"/></svg></b><b class="v"><svg class="i"><use href="#g2"/></svg></b><b class="v"><svg class="i"><use href="#g3"/></svg></b><b class="v"><svg class="i"><use href="#g4"/></svg></b><b class="v"><svg class="i"><use href="#g5"/></svg></b><b class="v"><svg class="i"><use href="#g6"/></svg></b><b class="v"><svg class="i"><use href="#g7"/></svg></b><b class="v"><svg class="i"><use href="#g8"/></svg></b><b class="v"><svg class="i"><use href="#g9"/></svg></b><b class="v"><svg class="i"><use href="#g10"/></svg></b><b class="v"><svg class="i"><use href="#g11"/></svg></b><i class="hsep hsep-s"></i>
      <b class="v"><svg class="i"><use href="#c1"/></svg></b><b class="v"><svg class="i"><use href="#c1"/></svg></b><b class="v"><svg class="i"><use href="#c2"/></svg></b><b class="v"><svg class="i"><use href="#c3"/></svg></b><b class="v"><svg class="i"><use href="#c4"/></svg></b><b class="v"><svg class="i"><use href="#c5"/></svg></b><b class="v"><svg class="i"><use href="#c6"/></svg></b><b class="v"><svg class="i"><use href="#c7"/></svg></b><i class="hsep"></i>
      <b class="v"><svg class="i"><use href="#c8"/></svg></b><i class="hsep hsep-s"></i>
      <b class="v"><svg class="i"><use href="#c9"/></svg></b><b class="v"><svg class="i"><use href="#c10"/></svg></b><b class="v"><svg class="i"><use href="#c11"/></svg></b><i class="hsep"></i>
      <b class="v"><svg class="i"><use href="#c12"/></svg></b>
    </aside>

    <section class="panel">
      <div class="tree">
        <div class="node root"><svg class="ic-root"><use href="#troot"/></svg><span>零件0</span></div>
        <div class="node"><span class="conn"><span class="dash dash-only"></span></span><svg class="ic"><use href="#tpl"/></svg><span>平面XY</span></div>
        <div class="node"><span class="conn"><span class="dash dash-only"></span></span><svg class="ic"><use href="#tpl"/></svg><span>平面YZ</span></div>
        <div class="node"><span class="conn"><span class="dash dash-only"></span></span><svg class="ic"><use href="#tpl"/></svg><span>平面XZ</span></div>
        <div class="node"><span class="conn"><span class="plus"></span><span class="dash"></span></span><svg class="ic"><use href="#tpad"/></svg><span>拉伸增料1</span></div>
        <div class="node"><span class="conn"><span class="plus"></span><span class="dash"></span></span><svg class="ic"><use href="#thole"/></svg><span>打孔0</span></div>
        <div class="node"><span class="conn"><span class="plus"></span><span class="dash"></span></span><svg class="ic"><use href="#thole"/></svg><span>打孔1</span></div>
        <div class="node"><span class="conn"><span class="plus"></span><span class="dash"></span></span><svg class="ic"><use href="#tpad"/></svg><span>拉伸增料2</span></div>
        <div class="node"><span class="conn"><span class="plus"></span><span class="dash"></span></span><svg class="ic"><use href="#tpad"/></svg><span>拉伸增料5</span></div>
        <div class="node"><span class="conn"><span class="plus"></span><span class="dash"></span></span><svg class="ic"><use href="#tpad"/></svg><span>拉伸增料6</span></div>
        <div class="node"><span class="conn"><span class="plus"></span><span class="dash"></span></span><svg class="ic"><use href="#tpad"/></svg><span>拉伸增料7</span></div>
        <div class="node"><span class="conn"><span class="plus"></span><span class="dash"></span></span><svg class="ic"><use href="#tpad"/></svg><span>拉伸增料8</span></div>
        <div class="node"><span class="conn"><span class="plus"></span><span class="dash"></span></span><svg class="ic"><use href="#thole"/></svg><span>打孔2</span></div>
        <div class="node"><span class="conn"><span class="plus"></span><span class="dash"></span></span><svg class="ic"><use href="#thole"/></svg><span>打孔3</span></div>
        <div class="node"><span class="conn"><span class="plus"></span><span class="dash"></span></span><svg class="ic"><use href="#thole"/></svg><span>打孔5</span></div>
        <div class="node"><span class="conn"><span class="plus"></span><span class="dash"></span></span><svg class="ic"><use href="#thole"/></svg><span>打孔6</span></div>
        <div class="node"><span class="conn"><span class="plus"></span><span class="dash"></span></span><svg class="ic"><use href="#thole"/></svg><span>打孔7</span></div>
        <div class="node"><span class="conn"><span class="plus"></span><span class="dash"></span></span><svg class="ic"><use href="#thole"/></svg><span>打孔8</span></div>
        <div class="node"><span class="conn"><span class="plus"></span><span class="dash"></span></span><svg class="ic"><use href="#thole"/></svg><span>打孔9</span></div>
        <div class="node"><span class="conn"><span class="plus"></span><span class="dash"></span></span><svg class="ic"><use href="#thole"/></svg><span>打孔10</span></div>
        <div class="node"><span class="conn"><span class="dash dash-only"></span></span><svg class="ic"><use href="#tpl"/></svg><span>平面31</span></div>
        <div class="node"><span class="conn"><span class="plus"></span><span class="dash"></span></span><svg class="ic"><use href="#tpad"/></svg><span>拉伸增料9</span></div>
        <div class="node"><span class="conn"><span class="dash dash-only"></span></span><svg class="ic"><use href="#tpl"/></svg><span>平面35</span></div>
        <div class="node last"><span class="conn"><span class="plus"></span><span class="dash"></span></span><svg class="ic"><use href="#tpad"/></svg><span>拉伸增料10</span></div>
      </div>
      <div class="tabs">
        <div class="tab active"><svg class="tabic"><use href="#ttab1"/></svg><span>零件特征</span></div>
        <div class="tab"><svg class="tabic"><use href="#ttab2"/></svg><span>加工管理</span></div>
      </div>
    </section>

    <section class="viewport">
      <svg class="scene" viewBox="248 111 719 579" preserveAspectRatio="none">
        <defs>
          <linearGradient id="gStub" gradientUnits="userSpaceOnUse" x1="440" y1="200" x2="365" y2="630"><stop offset="0" stop-color="#2f7a39"/><stop offset=".27" stop-color="#62c26a"/><stop offset=".6" stop-color="#2a6a30"/><stop offset="1" stop-color="#0e2a12"/></linearGradient>
          <linearGradient id="gB1" gradientUnits="userSpaceOnUse" x1="790" y1="40" x2="630" y2="920"><stop offset="0" stop-color="#357f3f"/><stop offset=".27" stop-color="#5ab864"/><stop offset=".55" stop-color="#2c6e34"/><stop offset=".85" stop-color="#0f3216"/><stop offset="1" stop-color="#0c2610"/></linearGradient>
          <linearGradient id="gB2" gradientUnits="userSpaceOnUse" x1="1180" y1="110" x2="1000" y2="1040"><stop offset="0" stop-color="#3c8443"/><stop offset=".27" stop-color="#6ad272"/><stop offset=".55" stop-color="#2c6e34"/><stop offset=".85" stop-color="#103418"/><stop offset="1" stop-color="#0c2610"/></linearGradient>
          <linearGradient id="gHole" gradientUnits="userSpaceOnUse" x1="1300" y1="265" x2="1180" y2="925"><stop offset="0" stop-color="#0e2a12"/><stop offset=".28" stop-color="#14401c"/><stop offset=".45" stop-color="#246a30"/><stop offset=".62" stop-color="#5ab864"/><stop offset=".8" stop-color="#459650"/><stop offset="1" stop-color="#4a9a50"/></linearGradient>
          <linearGradient id="gIn" x1=".6" y1="0" x2=".4" y2="1"><stop offset="0" stop-color="#2f7a39"/><stop offset=".55" stop-color="#57b060"/><stop offset="1" stop-color="#2f7a39"/></linearGradient>
          <linearGradient id="gBoss" x1=".6" y1="0" x2=".4" y2="1"><stop offset="0" stop-color="#36763a"/><stop offset="1" stop-color="#224e26"/></linearGradient>
          <linearGradient id="gFront" gradientUnits="userSpaceOnUse" x1="40" y1="1060" x2="30" y2="1260"><stop offset="0" stop-color="#3a7a3c"/><stop offset="1" stop-color="#2c5c2d"/></linearGradient>
          <linearGradient id="gPin" x1="0" y1="0" x2="1" y2="1"><stop offset="0" stop-color="#244f26"/><stop offset="1" stop-color="#4c9c50"/></linearGradient>
        </defs>
        <g transform="translate(340 210) scale(.3333)">
          <path d="M55 1025L493 780L920 1010L460 1130H430L50 1045Q35 1035 55 1025Z" fill="#44843f"/>
          <path d="M460 1130L665 1015L920 1010L460 1255Z" fill="#336231"/>
          <path d="M30 1165L38 1040L430 1130H460V1255L420 1258Z" fill="url(#gFront)"/>
          <path d="M672 930L840 965L920 1010L665 1018Z" fill="#356633"/>
          <path d="M550 890L548 990L665 1015L672 930Z" fill="#2f5f2e"/>
          <ellipse cx="225" cy="1030" rx="75" ry="20" fill="#2c5c2c"/>
          <ellipse cx="225" cy="1040" rx="72" ry="17" fill="#44843f"/>
          <ellipse cx="225" cy="1049" rx="38" ry="10" fill="#2c5c2c"/>
          <path d="M430 203C370 240 315 370 315 480C315 540 335 590 365 610L505 648L600 230L475 203Z" fill="url(#gStub)"/>
          <path d="M770 42C640 100 530 350 505 590C500 720 530 850 600 905L680 930L1100 1040L1040 90L815 42Z" fill="url(#gB1)"/>
          <path d="M1070 83C960 130 800 330 785 640C775 800 800 940 920 1005L1120 1050L1360 150Z" fill="url(#gB2)"/>
          <ellipse cx="1229" cy="596" rx="202" ry="467" transform="rotate(14 1229 596)" fill="#3e7a3d"/>
          <ellipse cx="1230" cy="595" rx="148" ry="338" transform="rotate(14 1230 595)" fill="url(#gHole)"/>
          <ellipse cx="1277" cy="485" rx="50" ry="55" fill="url(#gIn)"/>
          <g fill="#1f4a22">
            <ellipse cx="1252" cy="218" rx="19" ry="37"/><ellipse cx="1408" cy="318" rx="19" ry="37"/><ellipse cx="1073" cy="495" rx="19" ry="37"/><ellipse cx="1386" cy="697" rx="19" ry="37"/><ellipse cx="1052" cy="875" rx="19" ry="37"/><ellipse cx="1208" cy="975" rx="19" ry="37"/>
          </g>
          <g fill="url(#gPin)">
            <ellipse cx="1256" cy="222" rx="13" ry="30"/><ellipse cx="1412" cy="322" rx="13" ry="30"/><ellipse cx="1077" cy="499" rx="13" ry="30"/><ellipse cx="1390" cy="701" rx="13" ry="30"/><ellipse cx="1056" cy="879" rx="13" ry="30"/><ellipse cx="1212" cy="979" rx="13" ry="30"/>
          </g>
          <ellipse cx="871" cy="695" rx="97" ry="101" fill="url(#gBoss)"/>
          <ellipse cx="856" cy="706" rx="50" ry="54" fill="url(#gIn)"/>
          <path d="M567 940L560 1040M470 1022L555 1040L610 1018M555 1020L575 1040M545 1030H580" stroke="#e01818" stroke-width="3" fill="none"/>
          <text class="ax" x="582" y="984">z</text><text class="ax" x="483" y="1068">y</text><text class="ax" x="627" y="1060">x</text><text class="ax ax0" x="576" y="1086">0</text>
        </g>
      </svg>
    </section>

    <aside class="vbar vbar-r1">
      <span class="hgrip"></span>
      <b class="v"><svg class="i"><use href="#r1"/></svg></b><b class="v"><svg class="i"><use href="#r2"/></svg></b><b class="v"><svg class="i"><use href="#r3"/></svg></b><b class="v"><svg class="i"><use href="#r4"/></svg></b><i class="hsep"></i>
      <b class="v"><svg class="i"><use href="#r5"/></svg></b><b class="v"><svg class="i"><use href="#r6"/></svg></b>
      <i class="hsep hsep-end hsep-full"></i><span class="hgrip"></span>
      <b class="v"><svg class="i"><use href="#r7"/></svg></b><b class="v"><svg class="i"><use href="#r8"/></svg></b><i class="hsep"></i>
      <b class="v"><svg class="i"><use href="#r9"/></svg></b><i class="hsep"></i>
      <b class="v"><svg class="i"><use href="#r10"/></svg></b><b class="v"><svg class="i"><use href="#r11"/></svg></b><i class="hsep hsep-foot hsep-full"></i>
    </aside>
    <aside class="vbar vbar-r2">
      <span class="hgrip"></span>
      <b class="v"><svg class="i"><use href="#s1"/></svg></b><b class="v"><svg class="i"><use href="#s2"/></svg></b><b class="v"><svg class="i"><use href="#s3"/></svg></b><b class="v"><svg class="i"><use href="#s4"/></svg></b><b class="v"><svg class="i"><use href="#s5"/></svg></b><b class="v"><svg class="i"><use href="#s6"/></svg></b><b class="v"><svg class="i"><use href="#s7"/></svg></b><b class="v"><svg class="i"><use href="#s8"/></svg></b><b class="v"><svg class="i"><use href="#s9"/></svg></b><b class="v"><svg class="i"><use href="#s10"/></svg></b><b class="v"><svg class="i"><use href="#s11"/></svg></b><b class="v"><svg class="i"><use href="#s12"/></svg></b><b class="v"><svg class="i"><use href="#s13"/></svg></b><b class="v"><svg class="i"><use href="#s14"/></svg></b><i class="hsep"></i>
      <b class="v"><svg class="i"><use href="#s15"/></svg></b><i class="hsep"></i>
      <b class="v"><svg class="i"><use href="#s16"/></svg></b><b class="v"><svg class="i"><use href="#s17"/></svg></b><b class="v"><svg class="i"><use href="#s18"/></svg></b><i class="hsep"></i>
      <b class="v"><svg class="i"><use href="#s19"/></svg></b><i class="hsep hsep-foot2 hsep-full"></i>
    </aside>
  </main>

  <div class="row row-bottom">
    <div class="bar bar-d">
      <span class="grip"></span>
      <b class="s"><svg class="i"><use href="#u1"/></svg></b><b class="s"><svg class="i"><use href="#u2"/></svg></b><b class="s"><svg class="i"><use href="#u3"/></svg></b><b class="s"><svg class="i"><use href="#u4"/></svg></b><b class="s"><svg class="i"><use href="#u5"/></svg></b><b class="s"><svg class="i"><use href="#u6"/></svg></b><b class="s"><svg class="i"><use href="#u7"/></svg></b><b class="s"><svg class="i"><use href="#u8"/></svg></b><b class="s"><svg class="i"><use href="#u9"/></svg></b><b class="s"><svg class="i"><use href="#u10"/></svg></b>
    </div>
    <div class="bar bar-e">
      <span class="grip grip-b"></span>
      <b class="s"><svg class="i"><use href="#ers"/></svg></b><i class="sep sep-n"></i>
      <b class="s"><svg class="i"><use href="#v1"/></svg></b><b class="s"><svg class="i"><use href="#v2"/></svg></b><b class="s"><svg class="i"><use href="#v3"/></svg></b><b class="s"><svg class="i"><use href="#v4"/></svg></b><b class="s"><svg class="i"><use href="#v5"/></svg></b><b class="s"><svg class="i"><use href="#v6"/></svg></b><i class="sep"></i>
      <b class="s"><svg class="i"><use href="#w1"/></svg></b><b class="s"><svg class="i"><use href="#w2"/></svg></b><b class="s"><svg class="i"><use href="#w3"/></svg></b><i class="sep sep-n"></i>
      <b class="s"><svg class="i"><use href="#x1"/></svg></b><b class="s"><svg class="i"><use href="#x2"/></svg></b><b class="s"><svg class="i"><use href="#x3"/></svg></b><b class="s"><svg class="i"><use href="#x4"/></svg></b><b class="s"><svg class="i"><use href="#x5"/></svg></b><b class="s"><svg class="i"><use href="#x6"/></svg></b><b class="s"><svg class="i"><use href="#x7"/></svg></b>
    </div>
    <div class="bar bar-f">
      <span class="grip grip-b"></span>
      <b class="s"><svg class="i"><use href="#d1"/></svg></b><b class="s"><svg class="i"><use href="#d2"/></svg></b><b class="s"><svg class="i"><use href="#d3"/></svg></b><b class="s"><svg class="i"><use href="#d4"/></svg></b><b class="s"><svg class="i"><use href="#d5"/></svg></b><b class="s"><svg class="i"><use href="#d6"/></svg></b><b class="s"><svg class="i"><use href="#d7"/></svg></b>
    </div>
  </div>

  <footer class="status">
    <div class="f f1">拾取元素</div>
    <div class="f f2">操作指导</div>
    <div class="f f3">拾取添加</div>
    <div class="f f4">-0.099,21.675,0.000</div>
    <div class="f5"></div>
  </footer>
  <div class="taskbar"><div class="start"></div><div class="tb-mid"></div><div class="tb-end"></div></div>
</div>
</body>
</html>
```
FILE: styles.css
```css
* { box-sizing: border-box; }
html, body { margin: 0; padding: 0; height: 100%; overflow: hidden; }
body { background: #ebe9ed; font: 12px/16px "Noto Sans CJK SC", "Noto Sans", sans-serif; color: #111; }
.defs { display: block; height: 0; width: 0; overflow: hidden; }
.app { width: 1024px; height: 742px; display: flex; flex-direction: column; }
b, i { font-weight: normal; font-style: normal; }

.title { height: 27px; flex: none; display: flex; align-items: center; padding: 0 3px 2px 4px;
  background: linear-gradient(#1f56b8 0, #3d80d8 1px, #70b2ec 5px, #4f97e2 9px, #3a76cc 14px, #2f62b8 22px, #2a55a6 26px, #1e4590 27px); }
.appicon { width: 15px; height: 16px; flex: none; }
.title-text { margin-left: 3px; display: flex; align-items: center; color: #fff; font: bold 12px/20px "Noto Sans", sans-serif; white-space: nowrap; text-shadow: 1px 1px 1px #12357c; flex: 1; }
.cn { width: 34px; }
.zh { font: bold 14px/20px "Noto Sans CJK SC", sans-serif; letter-spacing: 2.4px; width: 85px; }
.yr { width: 40px; letter-spacing: .6px; }
.path { width: 207px; flex: none; font-size: 12px; letter-spacing: 0; }
.zh2 { width: 37px; letter-spacing: .6px; }
.ext { letter-spacing: 0; }
.winbtns { display: flex; gap: 4px; padding-top: 2px; }
.wb { width: 19px; height: 19px; border: 1px solid #cfe0f8; border-radius: 3px; background: linear-gradient(135deg, #6aa0e8, #2f60c8); display: flex; align-items: center; justify-content: center; overflow: hidden; }
.wb svg { flex: none; }
.wb.close { background: linear-gradient(135deg, #f0a080, #c84020); border-color: #f0d0c8; }

.menubar { height: 28px; flex: none; display: flex; align-items: center; border-bottom: 1px solid #a8a8a8; padding-left: 3px; }
.grip { width: 5px; height: 22px; flex: none; border-left: 1px solid #aaa; border-right: 1px solid #aaa; background: #f4f4f4; margin-right: 2px; }
.mi { width: 50.3px; padding-left: 6px; flex: none; white-space: nowrap; font-size: 12px; }

.row { height: 28px; flex: none; display: flex; border-bottom: 1px solid #ebe9ed; }
.bar { height: 28px; flex: none; display: flex; align-items: center; border-bottom: 1px solid #a8a8a8; }
.bar > .grip { margin-left: 3px; margin-right: 2px; }
.bar-a { width: 378px; border-right: 1px solid #a8a8a8; }
.bar-b { width: 352px; border-right: 1px solid #a8a8a8; }
.grip-b { flex: none; }
.row-3 { border-bottom: 2px solid #9a9a9a; height: 28px; }
.bar-c { width: 574px; height: 26px; border-right: 1px solid #a8a8a8; border-bottom: none; }
.s { width: 23px; height: 22px; flex: none; display: flex; align-items: center; justify-content: center; }
.s-u { width: 20px; }
.s-d { width: 13px; overflow: hidden; }
.s-c { width: 18px; }
.s-e { width: 16px; }
.on { background: #f6f5f7; box-shadow: inset 0 0 0 1px #bbb; height: 24px; }
.swatch { width: 15px; height: 9px; background: #fff; }
.i { width: 20px; height: 20px; display: block; flex: none; }
.s-d .i { margin: 0 -4px; }
.sep { width: 8px; height: 22px; flex: none; background: linear-gradient(#b0b0b0, #b0b0b0) center/1px 100% no-repeat; }
.sep-w { width: 10px; }
.sep-n { width: 7px; }

.main { height: 579px; flex: none; display: flex; }
.vbar { flex: none; display: flex; flex-direction: column; align-items: center; }
.vbar-1 { width: 28px; }
.vbar-2 { width: 33px; border-left: 1px solid #c4c4c4; }
.vbar-r1 { width: 29px; border-left: 1px solid #c4c4c4; }
.vbar-r2 { width: 28px; border-left: 1px solid #c4c4c4; }
.hgrip { width: 22px; height: 5px; flex: none; border-top: 1px solid #aaa; border-bottom: 1px solid #aaa; background: #f4f4f4; margin: 3px 0 5px; }
.hgrip-2 { margin: 3px 0 6px; }
.v { width: 22px; height: 22px; flex: none; display: flex; align-items: center; justify-content: center; }
.hsep { width: 22px; height: 8px; flex: none; background: linear-gradient(#b0b0b0, #b0b0b0) center/100% 1px no-repeat; }
.hsep-s { height: 7px; }
.hsep-end { height: 14px; }
.hsep-foot { height: 19px; background-position: bottom; width: 100%; }
.hsep-foot2 { height: 20px; background-position: bottom; width: 100%; }
.hsep-full { width: 100%; }
.vbar-r1 .hsep-end { height: 11px; background-position: bottom; }

.panel { width: 187px; flex: none; display: flex; flex-direction: column; padding: 1px 7px 0 1px; border-left: 1px solid #c4c4c4; }
.tree { height: 552px; flex: none; background: #fff; border: 2px solid #3c3c3c; outline: 1px solid #c8c8c8; overflow: hidden; padding-top: 1px; }
.node { height: 16px; display: flex; align-items: center; white-space: nowrap; font-size: 12px; color: #222; }
.root { height: 17px; padding-left: 1px; }
.ic-root { width: 18px; height: 18px; flex: none; margin-right: 2px; }
.ic { width: 16px; height: 16px; flex: none; margin-right: 4px; }
.conn { width: 19px; height: 16px; flex: none; display: flex; align-items: center;
  background: linear-gradient(#888 50%, transparent 50%) 8px 0 / 1px 2px repeat-y; }
.last .conn { background: linear-gradient(#888, #888) 8px 0 / 1px 8px no-repeat; }
.plus { width: 9px; height: 9px; margin-left: 4px; flex: none; border: 1px solid #999;
  background: linear-gradient(#111, #111) center/5px 1px no-repeat, linear-gradient(#111, #111) center/1px 5px no-repeat, #fff; }
.dash { flex: 1; height: 0; border-top: 1px dotted #777; }
.dash-only { margin-left: 8px; }
.tabs { display: flex; height: 26px; padding-top: 1px; }
.tab { display: flex; align-items: center; flex: none; height: 22px; width: 83px; padding-left: 4px; background: #ebe9ed; border: 1px solid #8a8a8a; border-width: 2px 2px 2px 0; border-radius: 0 0 3px 3px; white-space: nowrap; font-size: 12px; }
.tab.active { width: 87px; height: 25px; padding-left: 7px; border-width: 0 2px 2px 0; }
.tabic { width: 20px; height: 20px; flex: none; background: #b4b4b4; }
.tab .tabic { margin-right: 4px; }
.tab.active .tabic { margin-right: 4px; }

.viewport { flex: none; width: 719px; background: #000; overflow: hidden; }
.scene { width: 100%; height: 100%; display: block; }
.ax { fill: #fff; font: 40px "Liberation Sans", sans-serif; text-anchor: middle; }
.ax0 { font-size: 30px; font-weight: 700; }

.row-bottom { height: 29px; border-bottom: none; }
.row-bottom .bar { height: 28px; }
.bar-d { width: 251px; border-right: 1px solid #a8a8a8; }
.bar-e { width: 438px; border-right: 1px solid #a8a8a8; }
.bar-f { width: 181px; border-right: 1px solid #a8a8a8; }

.status { height: 19px; flex: none; display: flex; align-items: stretch; font-size: 12px; background: #ebe9ed; padding-top: 3px; }
.f { background: #fff; white-space: nowrap; line-height: 15px; height: 16px; }
.f1 { width: 450px; }
.f2 { width: 263px; color: #888; text-align: center; border-left: 1px solid #aaa; padding-right: 5px; }
.f3 { width: 103px; border-left: 2px solid #bbb; margin-left: 1px; text-align: center; }
.f4 { width: 203px; border-left: 1px solid #aaa; font-family: "Noto Sans", sans-serif; font-size: 12px; }
.f5 { flex: 1; background: #eee; }
.taskbar { height: 4px; flex: none; display: flex; border-top: 1px solid #2a5cb8; }
.start { width: 96px; background: #7cc47c; }
.tb-mid { flex: 1; background: linear-gradient(90deg, #3b78d0, #3b78d0 50%, #7ab6ea 50%); }
.tb-end { width: 94px; background: #fff; }
```
